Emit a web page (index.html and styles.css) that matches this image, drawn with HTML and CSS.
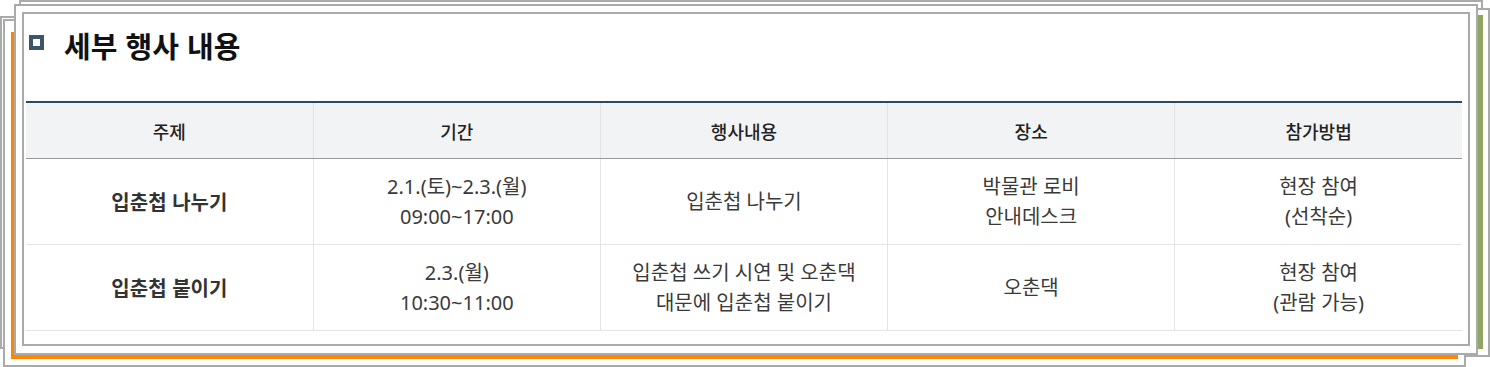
FILE: index.html
```html
<!DOCTYPE html>
<html lang="ko">
<head>
<meta charset="utf-8">
<title>세부 행사 내용</title>
<link rel="stylesheet" href="styles.css">
</head>
<body>
<div class="stack">
  <div class="sheet sheet-d"></div>
  <div class="sheet sheet-f"></div>
  <div class="sheet sheet-a"></div>
  <div class="sheet sheet-b"></div>
  <div class="accent-orange"></div>
  <div class="accent-green"></div>
  <div class="sheet sheet-c"></div>
  <section class="panel">
    <h2 class="title"><span class="title-icon"></span>세부 행사 내용</h2>
    <table class="events">
      <colgroup><col><col><col><col><col></colgroup>
      <thead>
        <tr><th>주제</th><th>기간</th><th>행사내용</th><th>장소</th><th>참가방법</th></tr>
      </thead>
      <tbody>
        <tr>
          <td class="subject">입춘첩 나누기</td>
          <td>2.1.(토)~2.3.(월)<br>09:00~17:00</td>
          <td>입춘첩 나누기</td>
          <td>박물관 로비<br>안내데스크</td>
          <td>현장 참여<br>(선착순)</td>
        </tr>
        <tr>
          <td class="subject">입춘첩 붙이기</td>
          <td>2.3.(월)<br>10:30~11:00</td>
          <td>입춘첩 쓰기 시연 및 오춘댁<br>대문에 입춘첩 붙이기</td>
          <td>오춘댁</td>
          <td>현장 참여<br>(관람 가능)</td>
        </tr>
      </tbody>
    </table>
  </section>
</div>
</body>
</html>
```

FILE: styles.css
```css
html, body {
  margin: 0;
  padding: 0;
  background: #fff;
}
body {
  font-family: "Noto Sans", "Noto Sans CJK KR", sans-serif;
  color: #333;
}
.stack {
  position: relative;
  width: 1490px;
  height: 367px;
  overflow: hidden;
}
.sheet {
  position: absolute;
  box-sizing: border-box;
  border: 2px solid #aaaaaa;
  background: #fff;
}
.sheet-d { left: 19px; top: 0; width: 1464px; height: 340px; }
.sheet-f { left: 40px; top: 8px; width: 1450px; height: 349px; }
.sheet-a { left: 0; top: 16px; width: 1440px; height: 333px; }
.sheet-b { left: 3px; top: 19px; width: 1463px; height: 348px; }
.accent-orange {
  position: absolute;
  left: 11px;
  top: 32px;
  width: 1447px;
  height: 327px;
  box-sizing: border-box;
  border-left: 3px solid #ff8400;
  border-bottom: 4px solid #ff8400;
  background: #fff;
}
.accent-green {
  position: absolute;
  left: 1477px;
  top: 15px;
  width: 6px;
  height: 334px;
  background: #8fa661;
}
.sheet-c { left: 14px; top: 4px; width: 1464px; height: 351px; }

.panel {
  position: relative;
  z-index: 2;
  box-sizing: border-box;
  margin: 12px 0 0 22px;
  width: 1448px;
  height: 334px;
  border: 2px solid #aaaaaa;
  background: #fff;
  padding: 0 6px 0 2px;
}
.title {
  display: flex;
  align-items: center;
  gap: 20px;
  height: 62px;
  margin: 0 0 25px;
  padding: 0 0 0 3px;
  font-family: "Noto Sans CJK KR", sans-serif;
  font-size: 29px;
  font-weight: 700;
  color: #111;
}
.title-icon {
  display: block;
  width: 15px;
  height: 15px;
  box-sizing: border-box;
  border: 4px solid #3b566a;
  background: #fff;
  margin-top: -5px;
}
.events {
  width: 1436px;
  margin-left: 0;
  border-collapse: collapse;
  table-layout: fixed;
  border-top: 2px solid #2c4a5d;
  font-size: 20px;
  line-height: 30px;
}
.events th {
  height: 55px;
  padding: 0;
  background: #f2f3f5;
  font-family: "Noto Sans CJK KR", sans-serif;
  font-size: 18px;
  font-weight: 500;
  color: #222;
  border-bottom: 1px solid #9a9a9a;
  border-right: 1px solid #e2e2e2;
}
.events td {
  height: 85px;
  padding: 0 8px;
  text-align: center;
  color: #3a3a3a;
  border-bottom: 1px solid #e4e4e4;
  border-right: 1px solid #e4e4e4;
}
.events th:last-child,
.events td:last-child {
  border-right: none;
}
.events td.subject {
  font-family: "Noto Sans CJK KR", sans-serif;
  font-weight: 700;
  color: #333;
}
```
